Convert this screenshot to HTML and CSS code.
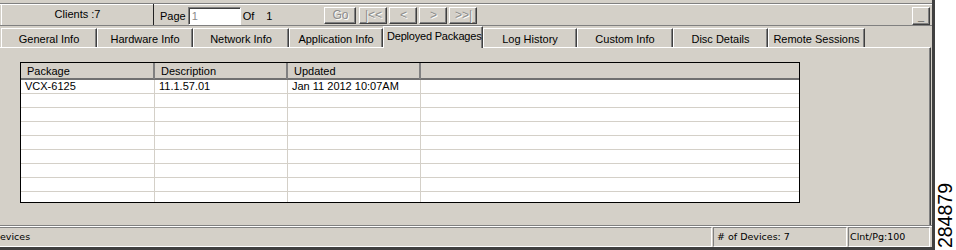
FILE: index.html
```html
<!DOCTYPE html>
<html lang="en">
<head>
    <meta charset="UTF-8">
    <title>Deployed Packages</title>
    <link rel="stylesheet" href="styles.css">
</head>
<body>
<div class="screen">
    <div class="window">
        <div class="toolbar">
            <div class="clients">Clients :7</div>
            <div class="pager">
                <span class="lbl">Page</span>
                <input type="text" class="page-input" value="1">
                <span class="of">Of</span>
                <span class="total">1</span>
            </div>
            <div class="nav">
                <button class="btn btn-go" disabled>Go</button>
                <button class="btn" disabled>|&lt;&lt;</button>
                <button class="btn" disabled>&lt;</button>
                <button class="btn" disabled>&gt;</button>
                <button class="btn" disabled>&gt;&gt;|</button>
            </div>
            <button class="btn-min">_</button>
        </div>

        <div class="tabs">
            <div class="tab w96">General Info</div>
            <div class="tab w96">Hardware Info</div>
            <div class="tab w96">Network Info</div>
            <div class="tab w94">Application Info</div>
            <div class="tab active">Deployed Packages</div>
            <div class="tab w94">Log History</div>
            <div class="tab w96">Custom Info</div>
            <div class="tab w95">Disc Details</div>
            <div class="tab w97">Remote Sessions</div>
        </div>

        <div class="panel">
            <div class="grid">
                <div class="row head">
                    <div class="hcell">Package</div>
                    <div class="hcell">Description</div>
                    <div class="hcell">Updated</div>
                    <div class="hcell last"></div>
                </div>
                <div class="row">
                    <div class="cell">VCX-6125</div>
                    <div class="cell">11.1.57.01</div>
                    <div class="cell">Jan 11 2012 10:07AM</div>
                    <div class="cell last"></div>
                </div>
                <div class="row"><div class="cell"></div><div class="cell"></div><div class="cell"></div><div class="cell last"></div></div>
                <div class="row"><div class="cell"></div><div class="cell"></div><div class="cell"></div><div class="cell last"></div></div>
                <div class="row"><div class="cell"></div><div class="cell"></div><div class="cell"></div><div class="cell last"></div></div>
                <div class="row"><div class="cell"></div><div class="cell"></div><div class="cell"></div><div class="cell last"></div></div>
                <div class="row"><div class="cell"></div><div class="cell"></div><div class="cell"></div><div class="cell last"></div></div>
                <div class="row"><div class="cell"></div><div class="cell"></div><div class="cell"></div><div class="cell last"></div></div>
                <div class="row"><div class="cell"></div><div class="cell"></div><div class="cell"></div><div class="cell last"></div></div>
                <div class="row"><div class="cell"></div><div class="cell"></div><div class="cell"></div><div class="cell last"></div></div>
            </div>
        </div>

        <div class="status">
            <div class="sp sp-main">evices</div>
            <div class="sp sp-dev"># of Devices: 7</div>
            <div class="sp sp-pg">Clnt/Pg:100</div>
        </div>
    </div>
    <div class="figno"><span>284879</span></div>
</div>
</body>
</html>
```

FILE: styles.css
```css
body {
    margin: 0;
    background: #fff;
    font-family: "Liberation Sans", Arial, sans-serif;
    font-size: 11px;
    color: #000;
}
.screen {
    display: flex;
    height: 250px;
}
.window {
    width: 935px;
    height: 250px;
    box-sizing: border-box;
    background: #d4d0c8;
    border-right: 3px solid #404040;
    border-bottom: 3px solid #404040;
    display: flex;
    flex-direction: column;
    padding-top: 3px;
}

/* top toolbar */
.toolbar {
    height: 23px;
    box-sizing: border-box;
    border-top: 1px solid #808080;
    border-bottom: 1px solid #808080;
    box-shadow: inset 0 1px #fff;
    display: flex;
    align-items: center;
}
.clients {
    align-self: stretch;
    margin-left: 1px;
    width: 151px;
    border-left: 1px solid #fff;
    border-right: 1px solid #222;
    text-align: center;
    line-height: 21px;
}
.pager {
    display: flex;
    align-items: center;
    padding-left: 6px;
    margin-top: 3px;
}
.page-input {
    width: 53px;
    height: 18px;
    box-sizing: border-box;
    margin: 0 0 0 2px;
    padding: 0 0 0 3px;
    border: 1px solid;
    border-color: #808080 #fff #fff #808080;
    box-shadow: inset 1px 1px #404040;
    font-family: inherit;
    font-size: 11px;
    color: #8a8a8a;
    background: #fff;
}
.of {
    margin-left: 2px;
}
.total {
    margin-left: 12px;
}
.nav {
    display: flex;
    gap: 2px;
    margin-left: 52px;
    margin-top: 1px;
}
.btn, .btn-min {
    height: 17px;
    width: 28px;
    padding: 0;
    background: #d4d0c8;
    border: 1px solid;
    border-color: #fff #404040 #404040 #fff;
    box-shadow: inset -1px -1px #808080;
    font-family: inherit;
    font-size: 11px;
    line-height: 14px;
}
.btn {
    color: #8c8c8c;
    text-shadow: 1px 1px #fff;
    font-size: 12px;
}
.btn-go {
    width: 32px;
    margin-right: 1px;
}
.btn-min {
    width: 18px;
    height: 18px;
    margin-left: auto;
    margin-right: 2px;
    margin-top: 3px;
    color: #000;
    font-weight: bold;
    line-height: 12px;
}

/* tabs */
.tabs {
    height: 21px;
    display: flex;
    align-items: flex-end;
    padding-left: 1px;
}
.tab {
    height: 19px;
    box-sizing: border-box;
    border-top: 1px solid #fff;
    border-left: 1px solid #fff;
    border-right: 1px solid #404040;
    box-shadow: inset -1px 0 #808080;
    text-align: center;
    line-height: 20px;
    white-space: nowrap;
    overflow: hidden;
}
.w94 { width: 94px; }
.w95 { width: 95px; }
.w96 { width: 96px; }
.w97 { width: 97px; }
.tab.active {
    width: 100px;
    height: 22px;
    margin-bottom: -1px;
    position: relative;
    z-index: 1;
    background: #d4d0c8;
    text-align: left;
    padding-left: 3px;
    line-height: 18px;
    letter-spacing: -0.2px;
}

/* content panel */
.panel {
    flex: 1;
    border-top: 1px solid #fff;
    border-right: 1px solid #404040;
    box-shadow: inset -1px 0 #808080;
    margin-right: 1px;
    padding: 14px 0 0 20px;
}
.grid {
    width: 780px;
    height: 141px;
    box-sizing: border-box;
    border: 1px solid #000;
    background: #fff;
    overflow: hidden;
}
.row {
    display: grid;
    grid-template-columns: 134px 133px 133px 1fr;
    height: 14px;
    border-bottom: 1px solid #d4d0c8;
    box-sizing: border-box;
    line-height: 13px;
}
.row.head {
    height: 17px;
    border-bottom: 2px solid #707070;
    background: #d4d0c8;
    line-height: 16px;
}
.hcell {
    padding-left: 6px;
    border-right: 2px solid #808080;
    white-space: nowrap;
}
.cell {
    padding-left: 4px;
    border-right: 1px solid #d4d0c8;
    white-space: nowrap;
}
.hcell.last, .cell.last {
    border-right: none;
}

/* status bar */
.status {
    height: 22px;
    box-sizing: border-box;
    border-top: 1px solid #808080;
    box-shadow: inset 0 1px #fff;
    padding-top: 1px;
    display: flex;
    gap: 1px;
    padding-right: 2px;
    font-family: "DejaVu Sans", Verdana, sans-serif;
    font-size: 9.5px;
}
.sp {
    box-sizing: border-box;
    border: 1px solid;
    border-color: #808080 #fff #fff #808080;
    line-height: 18px;
    white-space: nowrap;
    overflow: hidden;
}
.sp-main {
    flex: 1;
    border-left: none;
}
.sp-dev {
    width: 134px;
    padding-left: 3px;
}
.sp-pg {
    width: 82px;
    padding-left: 1px;
}

/* figure number */
.figno {
    width: 21px;
    display: flex;
    align-items: flex-end;
    justify-content: center;
    padding-bottom: 2px;
}
.figno span {
    writing-mode: vertical-rl;
    transform: rotate(180deg);
    font-size: 19.5px;
    line-height: 1;
}
```
